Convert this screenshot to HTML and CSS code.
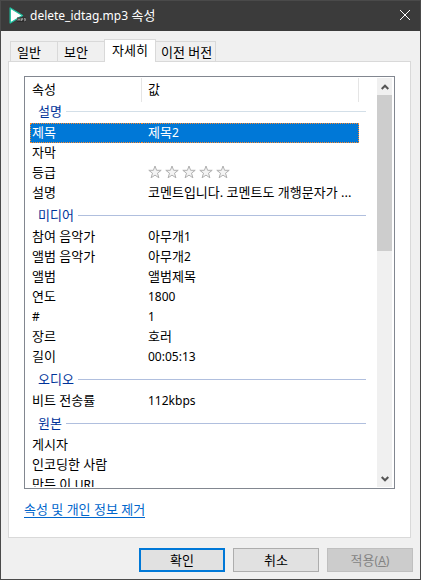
FILE: index.html
```html
<!DOCTYPE html>
<html lang="ko">
<head>
<meta charset="utf-8">
<meta name="viewport" content="width=device-width, initial-scale=1">
<title>delete_idtag.mp3 속성</title>
<link rel="stylesheet" href="styles.css">
</head>
<body>
<div class="window">
  <header class="titlebar">
    <svg class="app-icon" viewBox="0 0 17 17" aria-hidden="true">
      <path d="M1.2 1 L13.5 8.5 L1.2 16 Z" fill="#fff" stroke="#1fc0a0" stroke-width="1.4" stroke-linejoin="round"/>
      <rect x="8" y="10.5" width="9" height="4.5" fill="#2a2a2a"/>
      <path d="M9 14v-2.5l1 1.3 1-1.3v2.5M12.5 14v-2.5h1.3v1.3h-1.3M15 11.5h1.3v2.3H15M15.3 12.6h1" fill="none" stroke="#ccc" stroke-width=".6"/>
    </svg>
    <h1 class="title"><span class="latin">delete_idtag.mp3</span> 속성</h1>
    <button class="close" type="button" aria-label="닫기">
      <svg viewBox="0 0 10 10" aria-hidden="true"><path d="M0 0 L10 10 M10 0 L0 10"/></svg>
    </button>
  </header>

  <main class="content">
    <div class="tabs" role="tablist">
      <button class="tab" type="button" role="tab">일반</button>
      <button class="tab" type="button" role="tab">보안</button>
      <button class="tab active" type="button" role="tab" aria-selected="true">자세히</button>
      <button class="tab wide" type="button" role="tab">이전 버전</button>
    </div>

    <section class="panel" role="tabpanel">
      <div class="list">
        <div class="viewport">
          <table class="props">
            <colgroup><col class="col-name"><col><col class="col-end"></colgroup>
            <thead><tr><th>속성</th><th>값</th><td></td></tr></thead>
            <tbody>
              <tr class="group first"><th colspan="3"><div class="group-label">설명</div></th></tr>
              <tr class="selected"><td>제목</td><td>제목<span class="latin">2</span></td><td></td></tr>
              <tr><td>자막</td><td></td><td></td></tr>
              <tr><td>등급</td><td>
                <svg class="stars" viewBox="0 0 84 14" role="img" aria-label="등급 없음">
                  <defs><path id="star" d="M7 1 L8.6 5.3 H13.2 L9.5 8.2 L10.9 12.8 L7 10.1 L3.1 12.8 L4.5 8.2 L.8 5.3 H5.4 Z"/></defs>
                  <use href="#star"/><use href="#star" x="17"/><use href="#star" x="34"/><use href="#star" x="51"/><use href="#star" x="68"/>
                </svg></td><td></td></tr>
              <tr><td>설명</td><td>코멘트입니다. 코멘트도 개행문자가 ...</td><td></td></tr>
            </tbody>
            <tbody>
              <tr class="group"><th colspan="3"><div class="group-label">미디어</div></th></tr>
              <tr><td>참여 음악가</td><td>아무개<span class="latin">1</span></td><td></td></tr>
              <tr><td>앨범 음악가</td><td>아무개<span class="latin">2</span></td><td></td></tr>
              <tr><td>앨범</td><td>앨범제목</td><td></td></tr>
              <tr><td>연도</td><td><span class="latin">1800</span></td><td></td></tr>
              <tr><td><span class="latin">#</span></td><td><span class="latin">1</span></td><td></td></tr>
              <tr><td>장르</td><td>호러</td><td></td></tr>
              <tr><td>길이</td><td><span class="latin">00:05:13</span></td><td></td></tr>
            </tbody>
            <tbody>
              <tr class="group"><th colspan="3"><div class="group-label">오디오</div></th></tr>
              <tr><td>비트 전송률</td><td><span class="latin">112kbps</span></td><td></td></tr>
            </tbody>
            <tbody>
              <tr class="group"><th colspan="3"><div class="group-label">원본</div></th></tr>
              <tr><td>게시자</td><td></td><td></td></tr>
              <tr><td>인코딩한 사람</td><td></td><td></td></tr>
              <tr><td>만든 이 <span class="latin">URL</span></td><td></td><td></td></tr>
            </tbody>
          </table>
        </div>
        <div class="scrollbar">
          <button type="button" class="arrow" aria-label="위로">
            <svg viewBox="0 0 8 6" aria-hidden="true"><path d="M.7 5 L4 1.7 L7.3 5"/></svg>
          </button>
          <div class="track"><div class="thumb"></div></div>
          <button type="button" class="arrow" aria-label="아래로">
            <svg viewBox="0 0 8 6" aria-hidden="true"><path d="M.7 1 L4 4.3 L7.3 1"/></svg>
          </button>
        </div>
      </div>
      <a class="remove" href="#">속성 및 개인 정보 제거</a>
    </section>
  </main>

  <footer class="actions">
    <button class="btn default" type="button">확인</button>
    <button class="btn" type="button">취소</button>
    <button class="btn" type="button" disabled>적용<span class="latin">(<u>A</u>)</span></button>
  </footer>
</div>
</body>
</html>
```
FILE: styles.css
```css
* {
  box-sizing: border-box;
}

body {
  margin: 0;
  font-family: "Noto Sans", "Noto Sans CJK KR", sans-serif;
  font-size: 13px;
  line-height: 20px;
  color: #000;
}

button {
  margin: 0;
  padding: 0;
  border: 0;
  background: none;
  color: inherit;
  font: inherit;
}

.latin {
  font-size: 12px;
  line-height: 12px;
}

.window {
  display: flex;
  flex-direction: column;
  height: 100vh;
  border: 1px solid #4a4a4a;
  background: #f0f0f0;
}

.titlebar {
  display: flex;
  align-items: center;
  height: 30px;
  padding: 0 10px 2px 8px;
  background: #3b3b3b;
  color: #fff;
}

.app-icon {
  width: 17px;
  height: 17px;
}

.title {
  flex: 1;
  margin: 0 0 0 4px;
  font-size: 13px;
  font-weight: 400;
}

.close {
  display: flex;
}

.close svg {
  width: 10px;
  height: 10px;
  overflow: visible;
  fill: none;
  stroke: #fff;
}

.content {
  flex: 1;
  display: flex;
  flex-direction: column;
  min-height: 0;
  padding: 8px 9px 0 7px;
}

.tabs {
  position: relative;
  z-index: 1;
  display: flex;
  align-items: flex-end;
  padding-left: 2px;
}

.tab {
  width: 48px;
  height: 20px;
  padding-left: 6px;
  border: 1px solid #d9d9d9;
  border-bottom: 0;
  line-height: 18px;
  text-align: left;
  white-space: nowrap;
}

.tab + .tab {
  width: 47px;
  border-left: 0;
}

.tab + .tab.active {
  width: 52px;
  height: 23px;
  margin-bottom: -1px;
  margin-left: -1px;
  padding-left: 7px;
  padding-bottom: 3px;
  border-left: 1px solid #d9d9d9;
  background: #fff;
}

.tab + .tab.wide {
  width: 60px;
  padding-left: 5px;
}

.panel {
  flex: 1;
  display: flex;
  flex-direction: column;
  align-items: flex-start;
  min-height: 0;
  padding: 14px 15px 19px;
  border: 1px solid #d9d9d9;
  background: #fff;
}

.list {
  flex: 1;
  align-self: stretch;
  display: flex;
  min-height: 0;
  padding: 1px 2px 1px 5px;
  border: 1px solid #828790;
}

.viewport {
  flex: 1;
  min-width: 0;
  margin-right: 11px;
  overflow: hidden;
}

.props {
  width: 100%;
  table-layout: fixed;
  border-collapse: separate;
  border-spacing: 0;
}

.col-name {
  width: 112px;
}

.col-end {
  width: 7px;
}

.props th,
.props td {
  height: 20px;
  padding: 0 0 2px 2px;
  font-weight: 400;
  line-height: 16px;
  text-align: left;
  white-space: nowrap;
}

.props td:nth-child(2),
.props th:nth-child(2) {
  padding-left: 6px;
}

.props td:nth-child(3) {
  padding: 0;
}

.props thead th {
  height: 24px;
  border-right: 1px solid #e5e5e5;
}

.props .group th {
  height: 24px;
  padding: 0 0 0 8px;
  color: #003399;
}

.props .group.first th {
  height: 21px;
  padding-bottom: 3px;
}

.group-label {
  display: flex;
  align-items: center;
  gap: 4px;
}

.group-label::after {
  content: "";
  flex: 1;
  height: 1px;
  background: #b0bfde;
}

.first .group-label::after {
  background: #d3dfe8;
}

.props .selected td:nth-child(-n+2) {
  border: 0 dotted #ff8728;
  border-width: 1px 0;
  background: #0078d7;
  color: #fff;
}

.props .selected td:first-child {
  border-left-width: 1px;
  padding-left: 1px;
}

.props .selected td:nth-child(2) {
  border-right-width: 1px;
}

.stars {
  display: block;
  width: 84px;
  height: 14px;
  fill: #f4f4f4;
  stroke: #b0b0b0;
}

.scrollbar {
  display: flex;
  flex-direction: column;
  width: 15px;
  background: #f0f0f0;
}

.arrow {
  display: flex;
  align-items: center;
  justify-content: center;
  height: 17px;
}

.arrow svg {
  width: 8px;
  height: 6px;
  fill: none;
  stroke: #555;
  stroke-width: 2;
}

.track {
  flex: 1;
}

.thumb {
  height: 41.5%;
  background: #cdcdcd;
}

.remove {
  margin-top: 12px;
  border-bottom: 1px solid #0066cc;
  color: #0066cc;
  line-height: 16px;
  text-decoration: none;
}

.actions {
  display: flex;
  justify-content: flex-end;
  gap: 8px;
  padding: 10px 7px 7px;
}

.btn {
  width: 86px;
  height: 24px;
  border: 1px solid #adadad;
  background: #e1e1e1;
  line-height: 20px;
}

.btn.default {
  border: 2px solid #0078d7;
}

.btn:disabled {
  border-color: #bfbfbf;
  background: #ccc;
  color: #838383;
}
```
